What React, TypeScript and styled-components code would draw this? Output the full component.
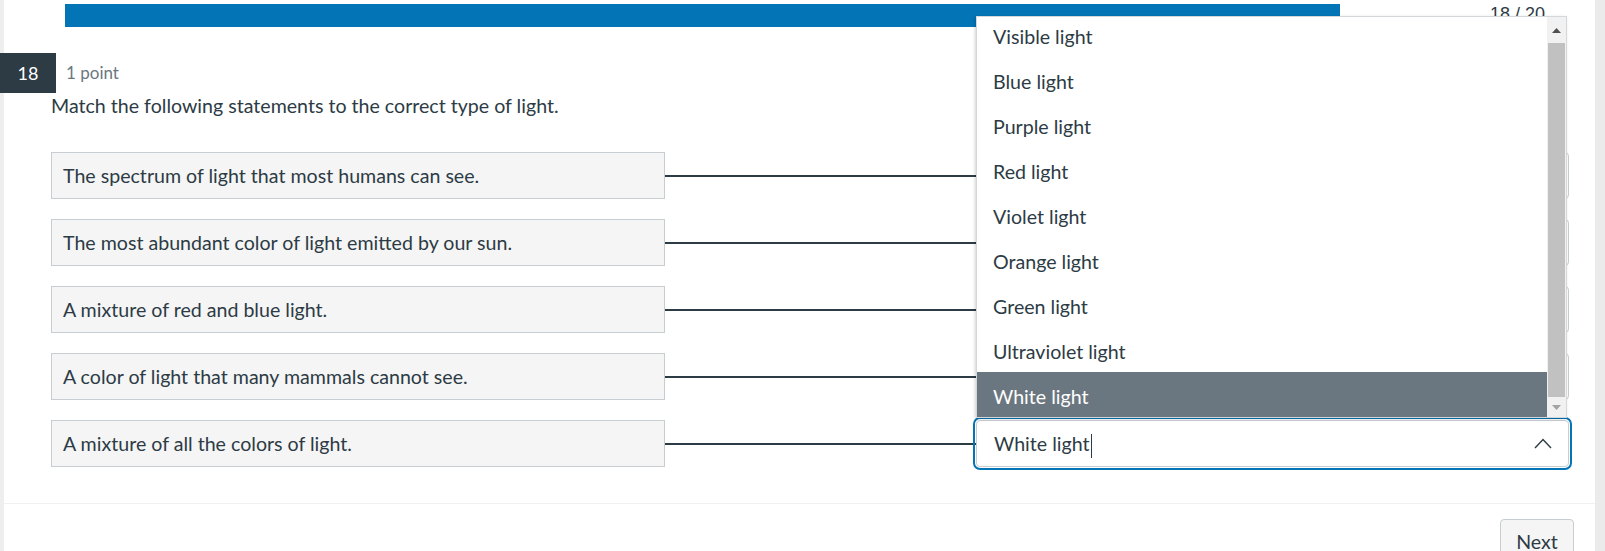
import React from 'react'
import styled, { createGlobalStyle } from 'styled-components'

const GlobalStyle = createGlobalStyle`
  html, body {
    margin: 0;
    padding: 0;
    background: #ebebeb;
  }
  body {
    font-family: Lato, 'Noto Sans', sans-serif;
    color: #2d3b45;
  }
  * {
    box-sizing: border-box;
  }
`

const rows = [
  { statement: 'The spectrum of light that most humans can see.', answer: 'Visible light' },
  { statement: 'The most abundant color of light emitted by our sun.', answer: 'Blue light' },
  { statement: 'A mixture of red and blue light.', answer: 'Purple light' },
  { statement: 'A color of light that many mammals cannot see.', answer: 'Ultraviolet light' },
  { statement: 'A mixture of all the colors of light.', answer: 'White light' }
]

const options = [
  'Visible light',
  'Blue light',
  'Purple light',
  'Red light',
  'Violet light',
  'Orange light',
  'Green light',
  'Ultraviolet light',
  'White light'
]

const TEXT = '19.6px'

const Page = styled('div')`
  height: 551px;
  overflow: hidden;
  display: flex;
  padding: 0 10px 0 4px;
  background: linear-gradient(to right, #eeeeee 4px, #ebebeb 4px);
`

const Card = styled('div')`
  flex: 1;
  background: #fff;
  display: flex;
  flex-direction: column;
`

const TopBar = styled('div')`
  display: flex;
  align-items: center;
  padding: 4px 0 0 61px;
  height: 27px;
`

const Track = styled('div')`
  width: 1417px;
  height: 23px;
`

const Fill = styled('div')`
  height: 100%;
  background: #0374b5;
`

const Counter = styled('span')`
  margin-left: 8px;
  margin-top: -2px;
  font-family: 'Liberation Sans', Arial, sans-serif;
  font-size: 18px;
  color: #2d3b45;
`

const QuestionHead = styled('div')`
  margin: 26px 0 0 -4px;
  display: flex;
  align-items: center;
  gap: 10px;
`

const Badge = styled('div')`
  width: 56px;
  height: 40px;
  background: #2d3b45;
  color: #fff;
  font-size: 18px;
  display: flex;
  align-items: center;
  justify-content: center;
`

const Points = styled('span')`
  font-size: 17px;
  color: #6b7780;
  margin-top: -2px;
`

const Prompt = styled('p')`
  margin: 0 0 0 47px;
  font-size: ${TEXT};
  line-height: 26px;
`

const Matches = styled('div')`
  margin: 33px 0 0 47px;
  display: flex;
  flex-direction: column;
  gap: 20px;
`

const Row = styled('div')`
  display: flex;
  align-items: center;
  height: 47px;
`

const Statement = styled('div')`
  width: 614px;
  height: 100%;
  display: flex;
  align-items: center;
  padding: 0 11px 1px;
  background: #f5f5f5;
  border: 1px solid #c7cdd1;
  font-size: ${TEXT};
`

const Connector = styled('div')`
  flex: 0 0 311px;
  height: 2px;
  background: #2d3b45;
`

const SelectWrap = styled('div')`
  position: relative;
  width: 593px;
  height: 100%;
`

const SelectBox = styled('div')<{ focused: boolean }>`
  height: 100%;
  display: flex;
  align-items: center;
  justify-content: space-between;
  padding: 3px 16px 0 17px;
  border: 1px solid #c7cdd1;
  border-radius: 4px;
  background: #fff;
  font-size: ${TEXT};
  outline: ${({ focused }) => (focused ? '2px solid #0374b5' : 'none')};
  outline-offset: 1px;
`

const Caret = styled('span')`
  display: inline-block;
  width: 1.5px;
  height: 24px;
  background: #2d3b45;
  vertical-align: middle;
  margin-left: 1px;
`

const ChevronSlot = styled('span')`
  display: flex;
  margin-top: -3px;
`

const Listbox = styled('div')`
  position: absolute;
  left: 0;
  right: 2px;
  bottom: calc(100% + 2px);
  height: 402px;
  display: flex;
  background: #fff;
  border: 1px solid #d5d8da;
  box-shadow: -1px 1px 3px rgba(0, 0, 0, 0.18);
  z-index: 5;
`

const OptionViewport = styled('div')`
  flex: 1;
  overflow: hidden;
  display: flex;
  flex-direction: column;
  justify-content: flex-end;
`

const Option = styled('div')<{ selected: boolean }>`
  flex: 0 0 45px;
  display: flex;
  align-items: center;
  padding: 4px 16px 0;
  font-size: ${TEXT};
  background: ${({ selected }) => (selected ? '#6b7780' : '#fff')};
  color: ${({ selected }) => (selected ? '#fff' : '#2d3b45')};
`

const Scrollbar = styled('div')`
  width: 19px;
  display: flex;
  flex-direction: column;
  background: #f1f1f1;
`

const ScrollButton = styled('div')<{ size: number }>`
  height: ${({ size }) => size}px;
  display: flex;
  align-items: center;
  justify-content: center;
  flex-shrink: 0;
`

const Thumb = styled('div')`
  flex: 1;
  margin: 0 1px;
  background: #c1c1c1;
`

const Footer = styled('div')`
  margin-top: 36px;
  border-top: 1px solid #eef0f1;
  display: flex;
  justify-content: flex-end;
  padding: 15px 21px 0 0;
`

const NextButton = styled('button')`
  width: 74px;
  height: 40px;
  border: 1px solid #c7cdd1;
  border-radius: 4px;
  background: #f5f5f5;
  color: #2d3b45;
  font-family: Lato, sans-serif;
  font-size: ${TEXT};
  padding: 4px 0 0;
`

const Arrow = ({ up, color }: { up: boolean; color: string }) => (
  <svg width="9" height="5" viewBox="0 0 9 5">
    <path d={up ? 'M0 5 L4.5 0 L9 5 Z' : 'M0 0 L4.5 5 L9 0 Z'} fill={color} />
  </svg>
)

const Chevron = () => (
  <svg width="18" height="11" viewBox="0 0 18 11" fill="none">
    <path d="M1 10 L9 1.5 L17 10" stroke="#2d3b45" strokeWidth="1.4" />
  </svg>
)

const App = () => {
  return (
    <>
      <GlobalStyle />
      <Page>
        <Card>
          <TopBar>
            <Track>
              <Fill style={{ width: `${(18 / 20) * 100}%` }} />
            </Track>
            <Counter>18 / 20</Counter>
          </TopBar>
          <QuestionHead>
            <Badge>18</Badge>
            <Points>1 point</Points>
          </QuestionHead>
          <Prompt>Match the following statements to the correct type of light.</Prompt>
          <Matches>
            {rows.map((row, index) => {
              const isLast = index === rows.length - 1
              return (
                <Row key={index}>
                  <Statement>{row.statement}</Statement>
                  <Connector />
                  <SelectWrap>
                    <SelectBox focused={isLast}>
                      <span>
                        {row.answer}
                        {isLast && <Caret />}
                      </span>
                      {isLast && (
                        <ChevronSlot>
                          <Chevron />
                        </ChevronSlot>
                      )}
                    </SelectBox>
                    {isLast && (
                      <Listbox>
                        <OptionViewport>
                          {options.map((opt) => (
                            <Option key={opt} selected={opt === row.answer}>
                              {opt}
                            </Option>
                          ))}
                        </OptionViewport>
                        <Scrollbar>
                          <ScrollButton size={26}>
                            <Arrow up color="#505050" />
                          </ScrollButton>
                          <Thumb />
                          <ScrollButton size={20}>
                            <Arrow up={false} color="#a3a3a3" />
                          </ScrollButton>
                        </Scrollbar>
                      </Listbox>
                    )}
                  </SelectWrap>
                </Row>
              )
            })}
          </Matches>
          <Footer>
            <NextButton>Next</NextButton>
          </Footer>
        </Card>
      </Page>
    </>
  )
}

export default App
